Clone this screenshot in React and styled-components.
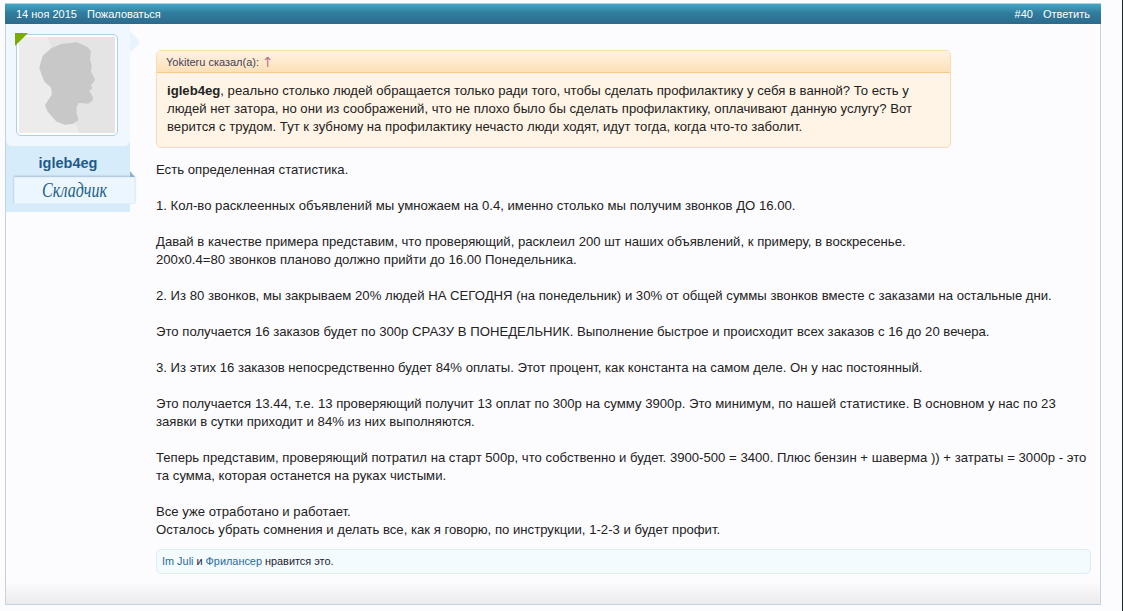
import React from "react";
import styled, { createGlobalStyle } from "styled-components";

const Global = createGlobalStyle`
  html, body { margin: 0; padding: 0; background: #fcfcff; }
  body { font-family: "Liberation Sans", Arial, sans-serif; color: #222; }
`;

const Page = styled.div`
  width: 1123px;
  height: 611px;
  box-sizing: border-box;
  padding: 3px 21px 0 5px;
  border-right: 1px solid #1c2a2c;
  overflow: hidden;
`;

const Post = styled.article`
  height: 602px;
  box-sizing: border-box;
  display: flex;
  flex-direction: column;
  border: 1px solid #c4d2e2;
  border-top: 0;
  background: linear-gradient(to bottom, #fcfcff calc(100% - 22px), #ebebed 100%);
`;

const TopBar = styled.header`
  height: 21px;
  flex: none;
  box-sizing: border-box;
  margin: 0 -1px;
  border-top: 1px solid #a9d4e4;
  padding: 0 11px 0 11px;
  display: flex;
  justify-content: space-between;
  align-items: center;
  font-size: 11px;
  color: #fff;
  background: linear-gradient(to bottom, #46a6c3 0%, #2f7d9e 45%, #2d6a8c 100%);
`;

const BarGroup = styled.div`
  display: flex;
  gap: 10px;
`;

const Body = styled.div`
  flex: 1;
  min-height: 0;
  display: flex;
`;

const Sidebar = styled.aside`
  width: 124px;
  flex: none;
  align-self: flex-start;
  position: relative;
  background: #d7ecfb;
  height: 188px;
`;

const AvatarPanel = styled.div`
  height: 122px;
  box-sizing: border-box;
  padding: 10px 0 0 10px;
  background: #f0f7fe;
  border-radius: 0 0 6px 6px;
  position: relative;
  &::after {
    content: "";
    position: absolute;
    left: 124px;
    top: 7px;
    border-style: solid;
    border-width: 11px 0 11px 10px;
    border-color: transparent transparent transparent #e8f3fc;
  }
`;

const AvatarFrame = styled.div`
  width: 102px;
  height: 102px;
  box-sizing: border-box;
  border: 1px solid #a9d0ec;
  border-radius: 5px;
  padding: 2px;
  background: #fff;
  position: relative;
`;

const Corner = styled.span`
  position: absolute;
  left: -2px;
  top: -2px;
  width: 0;
  height: 0;
  border-style: solid;
  border-width: 13px 13px 0 0;
  border-color: #79ac06 transparent transparent transparent;
`;

const Silhouette = styled.svg`
  display: block;
  width: 96px;
  height: 96px;
`;

const Name = styled.div`
  margin-top: 8px;
  text-align: center;
  font-size: 14.5px;
  line-height: 18px;
  font-weight: 700;
  color: #1f5a8c;
`;

const Ribbon = styled.div`
  position: absolute;
  left: 8px;
  top: 153px;
  width: 121px;
  height: 27px;
  box-sizing: border-box;
  text-align: center;
  background: #ecf6fe;
  border: 1px solid #e0effb;
  box-shadow: 0 -1px 2px rgba(60, 90, 120, 0.3);
  &::after {
    content: "";
    position: absolute;
    right: -1px;
    top: -7px;
    border-style: solid;
    border-width: 6px 0 0 5px;
    border-color: transparent transparent transparent #8fb3cc;
  }
`;

const RibbonText = styled.span`
  display: inline-block;
  transform: scaleX(0.8);
  font-family: "Liberation Serif", serif;
  font-style: italic;
  font-size: 20px;
  line-height: 24px;
  color: #1b5f86;
`;

const Content = styled.main`
  flex: 1;
  min-width: 0;
  padding: 26px 10px 0 26px;
`;

const Quote = styled.blockquote`
  margin: 0 0 13px;
  width: 795px;
  box-sizing: border-box;
  border: 1px solid #fbdcb0;
  border-radius: 5px;
  background: #fff4e5;
  overflow: hidden;
`;

const QuoteHead = styled.div`
  height: 22px;
  box-sizing: border-box;
  padding: 0 9px;
  display: flex;
  align-items: center;
  gap: 3px;
  font-size: 11px;
  color: #45405a;
  border-bottom: 1px solid #f8c98c;
  background: linear-gradient(to bottom, #fff3e2, #fde0b8);
`;

const Up = styled.span`
  color: #c0708c;
  font-size: 14px;
  font-family: "DejaVu Sans", sans-serif;
`;

const QuoteBody = styled.div`
  padding: 9px 10px 10px;
  font-size: 13.15px;
  line-height: 18.2px;
`;

const Message = styled.div`
  font-size: 13.15px;
  line-height: 18px;
`;

const Likes = styled.div`
  margin-top: 10px;
  margin-right: -1px;
  height: 25px;
  box-sizing: border-box;
  padding: 0 5px;
  display: flex;
  align-items: center;
  gap: 3px;
  font-size: 10.9px;
  color: #223;
  border: 1px solid #dcedfb;
  border-radius: 5px;
  background: #f4fbfe;
`;

const LikeName = styled.span`
  color: #2a6a9e;
`;

const outline =
  "M42.7 7.7 L57.7 6 L68.3 11 L71 14.3 L70.3 22.7 L72 29.3 L71 34.3 L75.3 42.7 L72.7 46 L71 48.3 L72.7 51 L69.3 53.7 L72.7 59.3 L73.3 62.7 L69.3 66 L59.3 65 L57 69.3 L56.7 76 L58.7 82.7 L54.3 86 L46 87 L37.7 83.7 L29.3 74.3 L26.7 68.3 L33.7 57.7 L32.7 50.3 L26 44.3 L21 31 L24.3 19.3 L32.7 11.7 Z";

export default function App() {
  return (
    <Page>
      <Global />
      <Post>
        <TopBar>
          <BarGroup>
            <span>14 ноя 2015</span>
            <span>Пожаловаться</span>
          </BarGroup>
          <BarGroup>
            <span>#40</span>
            <span>Ответить</span>
          </BarGroup>
        </TopBar>
        <Body>
          <Sidebar>
            <AvatarPanel>
              <AvatarFrame>
                <Corner />
                <Silhouette viewBox="0 0 96 96">
                  <rect width="96" height="96" fill="#e4e4e4" />
                  <path d="M0 0 L29 0 L60 96 L0 96 Z" fill="#ececec" />
                  <path d={outline} fill="#c8c8c8" stroke="#c8c8c8" strokeWidth="1.5" strokeLinejoin="round" />
                </Silhouette>
              </AvatarFrame>
            </AvatarPanel>
            <Name>igleb4eg</Name>
            <Ribbon><RibbonText>Складчик</RibbonText></Ribbon>
          </Sidebar>
          <Content>
            <Quote>
              <QuoteHead>
                <span>Yokiteru сказал(а):</span>
                <Up>↑</Up>
              </QuoteHead>
              <QuoteBody>
                <b>igleb4eg</b>, реально столько людей обращается только ради того, чтобы сделать профилактику у себя в ванной? То есть у людей нет затора, но они из соображений, что не плохо было бы сделать профилактику, оплачивают данную услугу? Вот верится с трудом. Тут к зубному на профилактику нечасто люди ходят, идут тогда, когда что-то заболит.
              </QuoteBody>
            </Quote>
            <Message>
              Есть определенная статистика.<br /><br />
              1. Кол-во расклеенных объявлений мы умножаем на 0.4, именно столько мы получим звонков ДО 16.00.<br /><br />
              Давай в качестве примера представим, что проверяющий, расклеил 200 шт наших объявлений, к примеру, в воскресенье.<br />
              200x0.4=80 звонков планово должно прийти до 16.00 Понедельника.<br /><br />
              2. Из 80 звонков, мы закрываем 20% людей НА СЕГОДНЯ (на понедельник) и 30% от общей суммы звонков вместе с заказами на остальные дни.<br /><br />
              Это получается 16 заказов будет по 300р СРАЗУ В ПОНЕДЕЛЬНИК. Выполнение быстрое и происходит всех заказов с 16 до 20 вечера.<br /><br />
              3. Из этих 16 заказов непосредственно будет 84% оплаты. Этот процент, как константа на самом деле. Он у нас постоянный.<br /><br />
              Это получается 13.44, т.е. 13 проверяющий получит 13 оплат по 300р на сумму 3900р. Это минимум, по нашей статистике. В основном у нас по 23 заявки в сутки приходит и 84% из них выполняются.<br /><br />
              Теперь представим, проверяющий потратил на старт 500р, что собственно и будет. 3900-500 = 3400. Плюс бензин + шаверма )) + затраты = 3000р - это та сумма, которая останется на руках чистыми.<br /><br />
              Все уже отработано и работает.<br />
              Осталось убрать сомнения и делать все, как я говорю, по инструкции, 1-2-3 и будет профит.
            </Message>
            <Likes>
              <LikeName>Im Juli</LikeName> и <LikeName>Фрилансер</LikeName> нравится это.
            </Likes>
          </Content>
        </Body>
      </Post>
    </Page>
  );
}
